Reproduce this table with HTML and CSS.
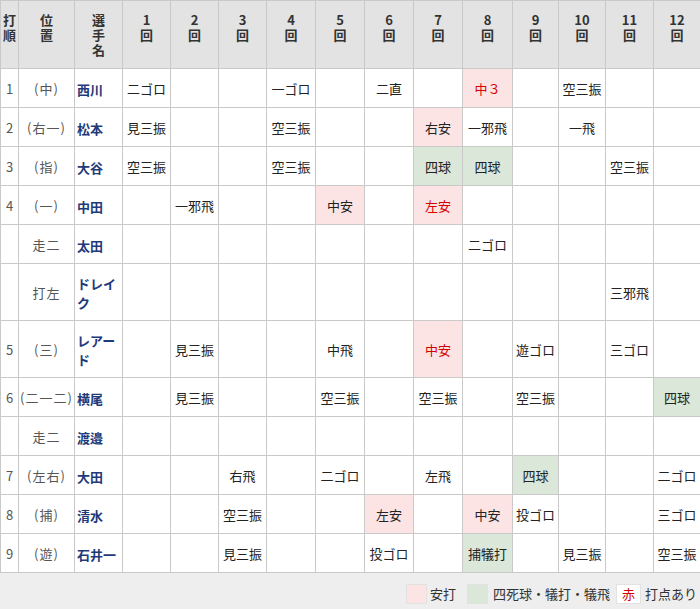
FILE: index.html
```html
<!DOCTYPE html>
<html lang="ja">
<head>
<meta charset="utf-8">
<link rel="stylesheet" href="styles.css">
</head>
<body>
<table class="score">
<colgroup>
<col class="c-order"><col class="c-pos"><col class="c-name">
<col class="w48"><col class="w48"><col class="w48"><col class="w49"><col class="w49"><col class="w49"><col class="w49"><col class="w50"><col class="w46"><col class="w47"><col class="w48"><col class="w47">
</colgroup>
<thead>
<tr>
<th>打<br>順</th><th>位<br>置</th><th>選<br>手<br>名</th>
<th>1<br>回</th><th>2<br>回</th><th>3<br>回</th><th>4<br>回</th><th>5<br>回</th><th>6<br>回</th><th>7<br>回</th><th>8<br>回</th><th>9<br>回</th><th>10<br>回</th><th>11<br>回</th><th>12<br>回</th>
</tr>
</thead>
<tbody>
<tr><td class="ord">1</td><td class="pos">(中)</td><td class="name">西川</td>
<td>二ゴロ</td><td></td><td></td><td>一ゴロ</td><td></td><td>二直</td><td></td><td class="hit rbi">中３</td><td></td><td>空三振</td><td></td><td></td></tr>
<tr><td class="ord">2</td><td class="pos">(右一)</td><td class="name">松本</td>
<td>見三振</td><td></td><td></td><td>空三振</td><td></td><td></td><td class="hit">右安</td><td>一邪飛</td><td></td><td>一飛</td><td></td><td></td></tr>
<tr><td class="ord">3</td><td class="pos">(指)</td><td class="name">大谷</td>
<td>空三振</td><td></td><td></td><td>空三振</td><td></td><td></td><td class="walk">四球</td><td class="walk">四球</td><td></td><td></td><td>空三振</td><td></td></tr>
<tr><td class="ord">4</td><td class="pos">(一)</td><td class="name">中田</td>
<td></td><td>一邪飛</td><td></td><td></td><td class="hit">中安</td><td></td><td class="hit rbi">左安</td><td></td><td></td><td></td><td></td><td></td></tr>
<tr><td class="ord"></td><td class="pos">走二</td><td class="name">太田</td>
<td></td><td></td><td></td><td></td><td></td><td></td><td></td><td>二ゴロ</td><td></td><td></td><td></td><td></td></tr>
<tr><td class="ord"></td><td class="pos">打左</td><td class="name">ドレイク</td>
<td></td><td></td><td></td><td></td><td></td><td></td><td></td><td></td><td></td><td></td><td>三邪飛</td><td></td></tr>
<tr><td class="ord">5</td><td class="pos">(三)</td><td class="name">レアード</td>
<td></td><td>見三振</td><td></td><td></td><td>中飛</td><td></td><td class="hit rbi">中安</td><td></td><td>遊ゴロ</td><td></td><td>三ゴロ</td><td></td></tr>
<tr><td class="ord">6</td><td class="pos">(二一二)</td><td class="name">横尾</td>
<td></td><td>見三振</td><td></td><td></td><td>空三振</td><td></td><td>空三振</td><td></td><td>空三振</td><td></td><td></td><td class="walk">四球</td></tr>
<tr><td class="ord"></td><td class="pos">走二</td><td class="name">渡邉</td>
<td></td><td></td><td></td><td></td><td></td><td></td><td></td><td></td><td></td><td></td><td></td><td></td></tr>
<tr><td class="ord">7</td><td class="pos">(左右)</td><td class="name">大田</td>
<td></td><td></td><td>右飛</td><td></td><td>二ゴロ</td><td></td><td>左飛</td><td></td><td class="walk">四球</td><td></td><td></td><td>二ゴロ</td></tr>
<tr><td class="ord">8</td><td class="pos">(捕)</td><td class="name">清水</td>
<td></td><td></td><td>空三振</td><td></td><td></td><td class="hit">左安</td><td></td><td class="hit">中安</td><td>投ゴロ</td><td></td><td></td><td>三ゴロ</td></tr>
<tr><td class="ord">9</td><td class="pos">(遊)</td><td class="name">石井一</td>
<td></td><td></td><td>見三振</td><td></td><td></td><td>投ゴロ</td><td></td><td class="walk">捕犠打</td><td></td><td>見三振</td><td></td><td>空三振</td></tr>
</tbody>
</table>
<div class="legend">
<span class="box box-hit"></span><span class="label">安打</span>
<span class="box box-walk"></span><span class="label">四死球・犠打・犠飛</span>
<span class="box box-rbi">赤</span><span class="label">打点あり</span>
</div>
</body>
</html>
```

FILE: styles.css
```css
html, body {
  margin: 0;
  padding: 0;
  background: #eeeeee;
}
body {
  font-family: "Noto Sans CJK JP", "Noto Sans", sans-serif;
  font-size: 13px;
  color: #222;
}
.score {
  border-collapse: collapse;
  table-layout: fixed;
  width: 700px;
  background: #fff;
}
.c-order { width: 18px; }
.c-pos { width: 56px; }
.c-name { width: 48px; }
.w46 { width: 46px; }
.w47 { width: 47px; }
.w48 { width: 48px; }
.w49 { width: 49px; }
.w50 { width: 50px; }
.score th, .score td {
  border: 1px solid #c9c9c9;
}
.score th {
  background: #e3e3e3;
  font-weight: bold;
  color: #333;
  vertical-align: top;
  padding: 11px 0;
  line-height: 15px;
  text-align: center;
}
.score td {
  padding: 10px 1px 9px;
  line-height: 19px;
  text-align: center;
  white-space: nowrap;
}
.score td.ord {
  color: #555;
  padding: 10px 0 9px;
}
.score td.pos {
  color: #555;
  padding: 10px 0 9px;
  letter-spacing: 1px;
}
.score td.name {
  text-align: left;
  padding: 10px 2px 8px;
  font-weight: bold;
  color: #1f3a7a;
  white-space: normal;
  line-height: 19px;
}
.score td.hit { background: #fde4e4; }
.score td.walk { background: #dbe7d8; }
.score td.rbi { color: #d40000; }
.legend {
  display: flex;
  justify-content: flex-end;
  align-items: center;
  padding: 11px 3px 0 0;
  line-height: 20px;
}
.box {
  box-sizing: border-box;
  width: 21px;
  height: 20px;
  border: 1px solid #e2e2e2;
  margin-right: 3px;
}
.box-hit { background: #fde4e4; }
.box-walk { background: #dbe7d8; margin-left: 11px; margin-right: 5px; }
.box-rbi {
  width: 25px;
  background: #fff;
  color: #d40000;
  text-align: center;
  line-height: 18px;
  margin-left: 6px;
  margin-right: 4px;
}
.label { color: #333; }
```
